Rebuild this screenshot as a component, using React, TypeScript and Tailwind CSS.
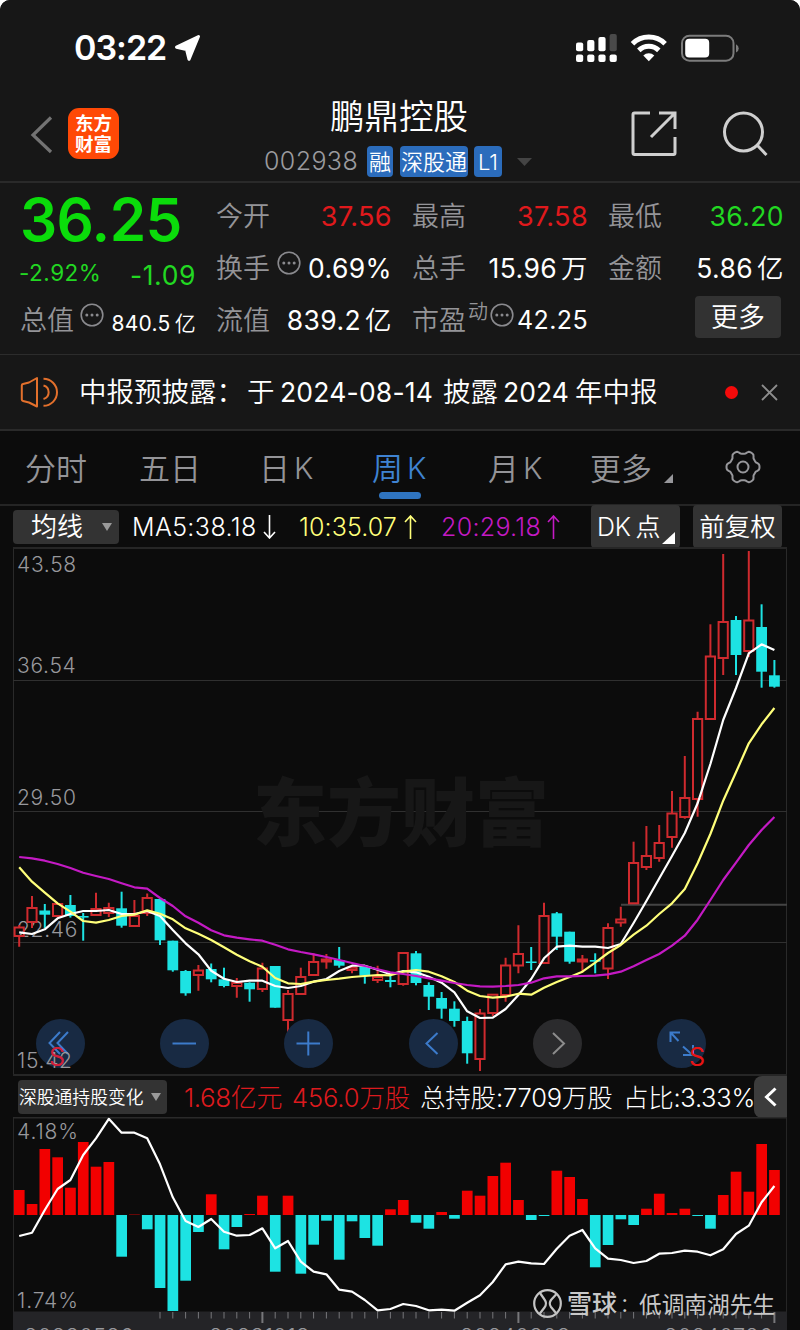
import { ReactNode } from 'react';

type Candle = [high: number, top: number, bottom: number, low: number, up: 0 | 1];

// high, body top, body bottom, low, rising
const candles: Candle[] = [
  [925, 927.5, 936, 946.8, 1], [896, 908, 922, 928, 1], [904, 910.5, 914.7, 928, 0], [903.5, 904, 916, 916.5, 1],
  [895, 905, 916, 917.6, 0], [913, 916, 917.6, 940.7, 0], [892.7, 909, 915, 915, 1], [902.7, 908, 913, 917, 1],
  [891.7, 908.3, 925.7, 927.7, 0], [900, 916, 926, 926, 1], [893.5, 898, 913, 916, 1], [899, 899, 940.3, 945, 0],
  [940.7, 940.7, 970.3, 971.7, 0], [970, 971, 993.3, 995.7, 0], [965, 970.5, 975, 990.7, 1], [963.5, 969, 979.3, 982.3, 0],
  [967.7, 979.3, 986, 987.3, 0], [978, 983, 986, 997.7, 1], [982.3, 982.7, 989.3, 1001.7, 0], [962.7, 968.5, 989, 992, 1],
  [966, 966, 1007.7, 1007.7, 0], [990, 994, 1020, 1034.3, 1], [967.7, 977, 994, 994, 1], [953.3, 962, 975, 975, 1],
  [954, 959.5, 961.5, 968.7, 1], [947, 960, 965.7, 967.7, 0], [965, 967.7, 970, 973.3, 1], [967, 967, 975.7, 983.7, 0],
  [965.7, 977, 980, 983, 1], [975.7, 980, 982, 987.3, 0], [952.7, 953, 984, 985.7, 1], [951, 953.3, 983, 985.3, 0],
  [982.3, 985, 996.7, 1010, 0], [992, 998, 1008.7, 1018.7, 0], [1001.3, 1008.7, 1021, 1026.7, 0], [1016.7, 1021, 1053.3, 1063.7, 0],
  [1009, 1013.5, 1059, 1071, 1], [994.3, 994.7, 1013, 1016, 1], [957.7, 965.5, 995, 1001.7, 1], [925.3, 954, 965.5, 973.3, 1],
  [947, 961.5, 963, 970, 0], [902.7, 916, 963, 963, 1], [912, 913.3, 936.7, 950, 0], [931.7, 931.7, 961.7, 963.7, 0],
  [955, 959.5, 961.5, 972.7, 1], [953.3, 960, 961.7, 973.3, 0], [923.3, 928, 968.5, 979, 1], [906.7, 919.5, 922.5, 926.7, 1],
  [841.7, 863, 903.3, 903.3, 1], [826, 856, 867, 870, 1], [825, 843, 858, 861.7, 1], [791, 813.5, 837, 847.7, 1],
  [756, 798, 817, 818.7, 1], [711.7, 719, 799, 816.7, 1], [624.3, 656.5, 719, 719, 1], [554, 622, 658, 675, 1],
  [616, 620, 655, 675, 0], [551, 620.5, 651, 657, 1], [604.3, 627, 671.7, 687.7, 0], [660, 675.3, 686.7, 687.7, 0],
];

const ma5 = [
  932.3, 934, 929.3, 918.3, 914, 911, 911, 910, 914, 914, 911, 916, 930, 943.3, 954.3, 970.7, 978.7, 982, 980.7, 980.7,
  986, 988, 986, 981.7, 979, 971, 965.7, 965.7, 969.7, 974.3, 971, 972.3, 976.7, 982.7, 992.3, 1011.3, 1018, 1017.7, 1009, 995,
  979, 958.3, 946.7, 945.7, 946.7, 946.7, 948, 944, 923, 901, 878.5, 856, 833, 803.3, 764, 720, 688, 653.3, 644.3, 650,
];
const ma10 = [
  867.3, 881.7, 892.7, 903.3, 911.7, 921, 922.7, 920, 916, 914.7, 910.3, 913.7, 919.3, 928.3, 933.7, 940, 947.3, 954.7, 961.3, 966.7,
  978, 983.3, 984, 981.7, 980, 978.7, 977, 976, 975, 975.3, 971.7, 970, 971.7, 976.3, 982, 990.7, 996, 997.7, 996.7, 993.7,
  994.7, 987.7, 982, 977, 971.7, 962.7, 953, 945, 934.7, 925.7, 914, 903.3, 889, 863.3, 834, 800.7, 772.3, 743.3, 724.3, 708,
];
const ma20 = [
  857, 858.3, 860.7, 864, 868, 872.7, 876, 879, 883.3, 887.3, 888.7, 898, 906, 916.3, 922.7, 930.3, 935.3, 937.7, 939.3, 940.7,
  944.7, 949.3, 952, 954.3, 957, 960, 963, 966, 969.3, 972.3, 974, 976, 978.3, 980.7, 983, 985, 986.3, 986.7, 986, 985,
  982.7, 978.3, 976.3, 976.3, 976, 975.7, 974.3, 971.7, 966.3, 960, 954, 945.7, 935.7, 919.7, 900, 880, 862.7, 845, 830, 817,
];
const flows = [
  25, 11, 66, 57.7, 27.3, 73, 48.3, 53, -41.7, 0.4, -14.3, -73, -96, -65.7, -17, 20.7, -34.3, -12, 1, 19.3,
  -56.7, 19.3, -58.7, -29.7, -5.7, -44.7, -6.3, -23, -30.7, 5.7, 15, -7.7, -13.7, 3, -3.7, 24.3, 19.3, 39, 52.3, 15,
  -5, -1, 44.3, 38, 16, -52.3, -30, -4.3, -10, 6.3, 21.3, 2, 6.3, -1, -13.7, 20, 43.3, 23.3, 71, 45,
];
const holding = [
  1236, 1232.7, 1210, 1189, 1180, 1155, 1138.3, 1118.8, 1132.7, 1132.7, 1138.3, 1164.3, 1197.3, 1221, 1227, 1219, 1231.7, 1235.7, 1235, 1228.3,
  1248.3, 1241, 1261.7, 1271.7, 1274.3, 1289.7, 1291.7, 1300, 1310.3, 1309, 1304, 1306, 1310.3, 1309.7, 1310.7, 1302.7, 1295.3, 1282, 1264.3, 1261.7,
  1263.3, 1264, 1248.7, 1235.7, 1230, 1248.3, 1258.7, 1260, 1263, 1261, 1253.7, 1253, 1250.7, 1251.7, 1255.3, 1249.3, 1234, 1225.7, 1202.3, 1186,
];

const x = (i: number) => 19.2 + i * 12.8;
const line = (ys: number[]) => ys.map((y, i) => `${x(i).toFixed(1)},${y}`).join(' ');

// six-lobed outline of the settings icon
const gear = Array.from({ length: 72 }, (_, i) => {
  const a = (i * Math.PI) / 36;
  const r = 14.9 + 1.7 * Math.tanh(1.8 * Math.cos(6 * a));
  return `${(r * Math.cos(a)).toFixed(2)},${(r * Math.sin(a)).toFixed(2)}`;
}).join(' ');

function StatusBar() {
  return (
    <div className="flex h-[96px] items-center pl-[74px] pr-[60px]">
      <span className="w-[99px] text-[34px] leading-none font-semibold tracking-[-1px] text-white">03:22</span>
      <svg className="h-[30px] w-[30px]" viewBox="173 33 30 30">
        <path d="M198.500 36.500 189 59.300 186.500 49.500 176.500 47.200Z" fill="#fff" stroke="#fff" strokeWidth="3" strokeLinejoin="round" />
      </svg>
      <svg className="ml-auto h-[30px] w-[166px]" viewBox="574 32 166 30">
        <g fill="#fff">
          <rect x="576" y="41.5" width="7.2" height="8.7" rx="2" />
          <rect x="587.2" y="39" width="7.2" height="11.2" rx="2" />
          <rect x="598.4" y="36" width="7.2" height="14.2" rx="2" />
          <rect x="609.6" y="33" width="7.2" height="17.2" rx="2" fill="#4a4a4a" />
          {[576, 587.2, 598.4, 609.6].map((dot) => (
            <rect key={dot} x={dot} y="53.4" width="7.2" height="7.6" rx="2" />
          ))}
          <path d="M648.800 60.200 643.300 54.500a8 8 0 0 1 11 0Z" />
        </g>
        <g fill="none" stroke="#fff" strokeWidth="5">
          <path d="M632.500 42.800a23.200 23.200 0 0 1 32.600 0" />
          <path d="M638.800 49.400a14.400 14.400 0 0 1 20 0" />
        </g>
        <rect x="682" y="34.7" width="51.5" height="25" rx="7.5" fill="none" stroke="#7c7c7c" strokeWidth="2" />
        <rect x="685.2" y="37.8" width="24" height="18.6" rx="4" fill="#fff" />
        <path d="M736 43.2a4.6 4.6 0 0 1 0 8.4Z" fill="#7c7c7c" />
      </svg>
    </div>
  );
}

function Header() {
  return (
    <header className="flex h-[87px] items-start border-b-2 border-[#2a2a2a]">
      <svg className="mt-[19px] ml-[28px] h-[40px] w-[26px]" viewBox="28 115 26 40">
        <path d="M51 117.500 33 135 51 152" fill="none" stroke="#737373" strokeWidth="3.2" />
      </svg>
      <div className="mt-[12px] ml-[14px] flex h-[51px] w-[51px] flex-col items-center justify-center rounded-[11px] bg-[#ff4906] text-[18.500px] leading-[21px] font-bold text-white">
        <span>东方</span>
        <span>财富</span>
      </div>
      <div className="ml-[145px] flex w-[270px] flex-col">
        <h1 className="ml-[66px] h-[50px] text-[34.5px] leading-[42px] font-[350] whitespace-nowrap text-white">鹏鼎控股</h1>
        <div className="flex h-[31px] items-center text-[22px] leading-none font-[350] text-white">
          <span className="w-[103px] text-[25px] font-light tracking-[0.4px] text-[#9b9b9f]">002938</span>
          <span className="flex h-[31px] w-[26px] items-center justify-center rounded bg-[#2b6cbc]">融</span>
          <span className="ml-[7px] flex h-[31px] w-[68px] items-center justify-center rounded bg-[#2b6cbc]">深股通</span>
          <span className="ml-[6px] flex h-[31px] w-[28px] items-center justify-center rounded bg-[#2b6cbc]">L1</span>
          <svg className="ml-[15px] h-[8px] w-[15px]" viewBox="0 0 15 8">
            <path d="M0 0H15L7.500 8Z" fill="#444" />
          </svg>
        </div>
      </div>
      <svg className="mt-[12px] ml-[91px] h-[52px] w-[144px]" viewBox="625 108 144 52" fill="none" stroke="#cfcfcf" strokeWidth="3">
        <path d="M650 113H634.500a1.500 1.500 0 0 0-1.500 1.500V153a1.500 1.500 0 0 0 1.500 1.500H673.500a1.500 1.500 0 0 0 1.500-1.500V137" />
        <path d="M659 113H675V129M651 137 675 113" />
        <circle cx="743.500" cy="132" r="19" />
        <path d="M757 145 766.500 155" />
      </svg>
    </header>
  );
}

function Dots() {
  return (
    <svg className="h-[24px] w-[24px] shrink-0" viewBox="0 0 24 24">
      <circle cx="12" cy="12" r="10.8" fill="none" stroke="#8a8a8e" strokeWidth="1.600" />
      <circle cx="6.800" cy="12" r="1.500" fill="#8a8a8e" />
      <circle cx="12" cy="12" r="1.500" fill="#8a8a8e" />
      <circle cx="17.200" cy="12" r="1.500" fill="#8a8a8e" />
    </svg>
  );
}

type CellProps = { label: string; extra?: ReactNode; children?: ReactNode; tone?: string };

function Cell({ label, extra, children, tone = 'text-white text-[26.500px]' }: CellProps) {
  return (
    <div className="flex h-[52px] w-[176px] items-center whitespace-nowrap">
      <span className="text-[27px] font-[350] text-[#949498]">{label}</span>
      {extra}
      <span className={`ml-auto tracking-[0.4px] ${tone}`}>{children}</span>
    </div>
  );
}

function Unit({ children }: { children: string }) {
  return <span className="ml-[4px] font-[350]">{children}</span>;
}

function Quote() {
  return (
    <section className="flex h-[172px] gap-[20px] border-b border-[#2c2c2c] pt-[7px] pl-[20px] leading-none">
      <div className="w-[176px] whitespace-nowrap">
        <div className="flex h-[60px] items-center pt-px text-[58.500px] font-semibold tracking-[-0.6px] text-[#0bdc0b]">36.25</div>
        <div className="flex h-[46px] items-center justify-between text-[#22d822]">
          <span className="-ml-px text-[22.500px] tracking-[0.5px]">-2.92%</span>
          <span className="pt-[5px] text-[26.500px] tracking-[0.6px]">-1.09</span>
        </div>
        <div className="flex h-[48px] items-center">
          <span className="text-[27px] font-[350] text-[#949498]">总值</span>
          <span className="mb-[11px] ml-[6px]"><Dots /></span>
          <span className="mt-[6px] ml-auto text-[21px] tracking-[0.3px] text-white">840.5<Unit>亿</Unit></span>
        </div>
      </div>
      <div>
        <Cell label="今开" tone="text-[#e0191c] text-[27px]">37.56</Cell>
        <Cell label="换手" extra={<span className="mb-[10px] ml-[7px]"><Dots /></span>}>0.69%</Cell>
        <Cell label="流值">839.2<Unit>亿</Unit></Cell>
      </div>
      <div>
        <Cell label="最高" tone="text-[#e0191c] text-[27px]">37.58</Cell>
        <Cell label="总手">15.96<Unit>万</Unit></Cell>
        <Cell
          label="市盈"
          tone="text-white text-[25px]"
          extra={<><span className="mb-[16px] ml-[2px] text-[20px] font-[350] text-[#949498]">动</span><span className="mb-[10px] ml-[2px]"><Dots /></span></>}
        >
          42.25
        </Cell>
      </div>
      <div>
        <Cell label="最低" tone="text-[#22d822] text-[26.500px]">36.20</Cell>
        <Cell label="金额">5.86<Unit>亿</Unit></Cell>
        <button className="mt-[2px] ml-[87px] flex h-[42px] w-[86px] items-center justify-center rounded bg-[#323232] pt-px text-[27px] font-[350] text-white">更多</button>
      </div>
    </section>
  );
}

function Notice() {
  return (
    <section className="flex h-[76px] items-center border-b-2 border-[#2a2a2a] pl-[20px] text-[27.500px] leading-none font-[350] whitespace-nowrap text-white">
      <svg className="h-[32px] w-[38px]" viewBox="20 375 38 32" fill="none" stroke="#e3702c" strokeWidth="2" strokeLinejoin="round">
        <path d="M23 383 29 381.500 37 377V405.500L29 401.500 23 400Q21.800 399.700 21.800 398.500V384.500Q21.800 383.300 23 383Z" />
        <path d="M43.500 384.500a7 7 0 0 1 0 13.500M43.500 377.800a13.500 13.500 0 0 1 0 27" />
      </svg>
      <span className="ml-[21px] w-[168px] pt-px">中报预披露：</span>
      <span className="w-[33px] pt-px">于</span>
      <span className="w-[163px] text-[26.500px] font-normal tracking-[0.2px]">2024-08-14</span>
      <span className="w-[60px] pt-px">披露</span>
      <span className="w-[72px] text-[26.500px] font-normal">2024</span>
      <span className="w-[150px] pt-px">年中报</span>
      <span className="h-[13px] w-[13px] rounded-full bg-[#f50a0a]" />
      <svg className="ml-[23px] h-[17px] w-[17px]" viewBox="0 0 17 17">
        <path d="M1 1 16 16M16 1 1 16" stroke="#8d8d8d" strokeWidth="1.800" />
      </svg>
    </section>
  );
}

const tabs = [
  { name: '分时', box: 'w-[114px]' },
  { name: '五日', box: 'w-[120px]' },
  { name: '日', k: true, box: 'w-[113px]' },
  { name: '周', k: true, box: 'w-[116px]', active: true },
  { name: '月', k: true, box: 'w-[102px]' },
  { name: '更多', box: 'w-[74px]' },
];

function Tabs() {
  return (
    <nav className="flex h-[75px] border-b-2 border-[#252525] pl-[25px] text-[31px] leading-none font-[350] whitespace-nowrap text-[#949498]">
      {tabs.map((t) => (
        <div key={t.name} className={`flex flex-col ${t.box} ${t.active ? 'text-[#3f83d2]' : ''}`}>
          <span className="flex h-[61px] items-center gap-[4px] pt-[13px]">
            {t.name}
            {t.k && <span className="text-[30px]">K</span>}
          </span>
          {t.active && <span className="ml-[7px] h-[7px] w-[42px] rounded-full bg-[#2f74c0]" />}
        </div>
      ))}
      <svg className="mt-[43px] h-[9px] w-[9px]" viewBox="0 0 9 9">
        <path d="M9 0V9H0Z" fill="#97979b" />
      </svg>
      <svg className="mt-[18px] ml-[52px] h-[36px] w-[36px]" viewBox="-18 -18 36 36" fill="none" stroke="#97979b" strokeWidth="2" strokeLinejoin="round">
        <polygon points={gear} />
        <circle r="5.500" />
      </svg>
    </nav>
  );
}

function Arrow({ down }: { down?: boolean }) {
  return (
    <svg className={`h-[24px] w-[13px] ${down ? 'rotate-180' : ''}`} viewBox="0 0 13 24" fill="none" stroke="currentColor" strokeWidth="1.600">
      <path d="M6.500 24V1M1 7 6.500 1 12 7" />
    </svg>
  );
}

function Caret() {
  return (
    <svg className="h-[8px] w-[10px]" viewBox="0 0 10 8">
      <path d="M0 0H10L5 8Z" fill="#9a9a9a" />
    </svg>
  );
}

function Indicators() {
  return (
    <div className="flex h-[41px] items-center pl-[13px] text-[25px] leading-none font-light whitespace-nowrap text-white">
      <button className="flex h-[34px] w-[106px] items-center rounded bg-[#333] pl-[18px] text-[26px] font-[350]">
        <span className="w-[71px] pt-px text-left">均线</span>
        <Caret />
      </button>
      <span className="ml-[13px] w-[131px] pt-[2px] tracking-[0.4px]">MA5:38.18</span>
      <Arrow down />
      <span className="ml-[23px] w-[105px] pt-[2px] tracking-[0.1px] text-[#ffff7a]">10:35.07</span>
      <span className="text-[#ffff7a]"><Arrow /></span>
      <span className="ml-[24px] w-[106px] pt-[2px] tracking-[0.3px] text-[#c41ac4]">20:29.18</span>
      <span className="text-[#c41ac4]"><Arrow /></span>
      <button className="ml-[31px] flex h-[43px] w-[89px] items-center rounded bg-[#333] pl-[6px] font-[350]">
        <span className="w-[65px] pt-[2px] text-left tracking-[-0.3px]">DK<span className="ml-[5px]">点</span></span>
        <svg className="mt-[22px] h-[12px] w-[13px] shrink-0" viewBox="0 0 13 12">
          <path d="M13 0V12H0Z" fill="#fff" />
        </svg>
      </button>
      <button className="ml-[13px] flex h-[43px] w-[89px] items-center justify-center rounded bg-[#333] pt-px text-[25.500px] font-[350]">前复权</button>
    </div>
  );
}

const controls = [
  { name: 'first', d: 'M24 13 13.500 24 24 35M32 13 21.500 24 32 35' },
  { name: 'zoom out', d: 'M12.500 24.500H36' },
  { name: 'zoom in', d: 'M12.500 24.500H36M24.300 12.500V36.500' },
  { name: 'previous', d: 'M28.500 14 17.500 24.500 28.500 35' },
  { name: 'next', d: 'M20 14 31 24.500 20 35', off: true },
  { name: 'fullscreen', d: 'M13.500 23V13.500H23M14 14 21.500 22M26 27.500 35 35.500M36 26V36H26' },
];

function PriceChart() {
  return (
    <div className="relative h-[529px]">
      <svg className="block h-[529px] w-[800px]" viewBox="0 547 800 529">
        <g fill="none" stroke="#2a2a2a" strokeWidth="1">
          <path d="M13.500 548V1075.500M786.500 548V1075.500" />
          <path d="M13 680.500H787M13 811.500H787M13 942.500H787" stroke="#303030" />
          <path d="M13 548H787M13 1075H787" stroke="#262626" strokeWidth="2" />
        </g>
        <text x="253" y="840" fill="#171717" fontSize="74" fontWeight="900">东方财富</text>
        <path d="M621 904.700H787" stroke="#444" strokeWidth="2" />
        <g fill="#98989c" fontSize="21" fontWeight="300" letterSpacing="0.7">
          <text x="17" y="571.500">43.58</text>
          <text x="17" y="673">36.54</text>
          <text x="17" y="804.500">29.50</text>
          <text x="17" y="936.500">22.46</text>
        </g>
        {candles.map(([high, top, bottom, low, up], i) =>
          up ? (
            <g key={i} fill="none" stroke="#cf2a2e" strokeWidth="2">
              <path d={`M${x(i)} ${high}V${top}M${x(i)} ${bottom}V${low}`} />
              <rect x={x(i) - 4.6} y={top} width="9.200" height={bottom - top} />
            </g>
          ) : (
            <g key={i} fill="#1de3e3">
              <rect x={x(i) - 1} y={high} width="2" height={low - high} />
              <rect x={x(i) - 5.4} y={top} width="10.800" height={bottom - top} />
            </g>
          ),
        )}
        <g fill="none" strokeWidth="2.200" strokeLinejoin="round">
          <polyline points={line(ma5)} stroke="#fff" />
          <polyline points={line(ma10)} stroke="#ffff7a" />
          <polyline points={line(ma20)} stroke="#c41ac4" />
        </g>
      </svg>
      <div className="absolute top-[472px] left-[36px] flex gap-[75.200px]">
        {controls.map((c) => (
          <button key={c.name} aria-label={c.name} className={`h-[49px] w-[49px] rounded-full ${c.off ? 'bg-[#2b2b2d]' : 'bg-[#182a43]'}`}>
            <svg className={c.off ? 'text-[#8c8c8c]' : 'text-[#3c7bcb]'} viewBox="0 0 49 49" fill="none" stroke="currentColor" strokeWidth="2">
              <path d={c.d} />
            </svg>
          </button>
        ))}
      </div>
      <span className="absolute top-[503px] left-[17px] text-[21px] leading-none font-light tracking-[0.7px] text-[#98989c]">15.42</span>
      <span className="absolute top-[498px] left-[49px] text-[25px] leading-none text-[#d0203a]">S</span>
      <span className="absolute top-[498px] left-[689px] text-[25px] leading-none text-[#e81414]">S</span>
    </div>
  );
}

function HoldingBar() {
  return (
    <div className="flex h-[41px] items-center pl-[18px] text-[25.500px] leading-none font-light whitespace-nowrap">
      <button className="flex h-[34px] w-[149px] items-center rounded bg-[#333] pl-px text-[17.800px] font-[350] text-white">
        <span className="w-[132px] pt-[2px] text-left">深股通持股变化</span>
        <Caret />
      </button>
      <span className="ml-[17px] w-[108px] pt-[2px] text-[26px] tracking-[-0.4px] text-[#dc1a1e]">1.68亿元</span>
      <span className="w-[128px] pt-[2px] tracking-[-0.1px] text-[#dc1a1e]">456.0万股</span>
      <span className="w-[203px] pt-[2px] tracking-[-0.2px] text-white">总持股:7709万股</span>
      <span className="w-[131px] pt-[2px] tracking-[-0.3px] text-white">占比:3.33%</span>
      <button aria-label="expand" className="flex h-[42px] w-[33px] items-center justify-center rounded-l-lg bg-[#3c3c3c]">
        <svg className="h-[20px] w-[13px]" viewBox="0 0 13 20" fill="none" stroke="#fff" strokeWidth="3">
          <path d="M11.500 1.500 2.500 10 11.500 18.500" />
        </svg>
      </button>
    </div>
  );
}

function HoldingChart() {
  return (
    <svg className="block h-[213px] w-[800px]" viewBox="0 1117 800 213">
      <path d="M13.500 1117V1330M786.500 1117V1330" stroke="#262626" />
      <path d="M13 1117.500H787" stroke="#2a2a2a" strokeWidth="2" />
      <rect x="13" y="1311.500" width="774" height="20" fill="#242427" />
      {flows.map((v, i) => (
        <rect
          key={i}
          x={x(i) - 5.3}
          y={v > 0 ? 1215 - v : 1215}
          width="10.700"
          height={Math.abs(v)}
          fill={v > 0 ? '#f20000' : '#1de3e3'}
        />
      ))}
      <g fill="#98989c" fontSize="21" fontWeight="300" letterSpacing="0.9">
        <text x="17" y="1138.500">4.18%</text>
        <text x="17" y="1308">1.74%</text>
      </g>
      <polyline points={line(holding)} fill="none" stroke="#fff" strokeWidth="2.200" strokeLinejoin="round" />
      {flows.map((_, i) =>
        i < 11 ? null : (
          <path key={i} d={`M${x(i)} 1312V${i % 20 === 19 ? 1323 : 1318.5}`} stroke="#77777a" strokeWidth={i % 20 === 19 ? 2 : 1} />
        ),
      )}
      <g fill="#98989c" fontSize="22" fontWeight="300" letterSpacing="0.3">
        <text x="24" y="1344">20230526</text>
        <text x="209" y="1344">20231013</text>
        <text x="460" y="1344">20240308</text>
        <text x="664" y="1344">20240726</text>
      </g>
      <g fill="none" stroke="#c4c4c4" strokeWidth="2.200">
        <circle cx="547.500" cy="1303.500" r="13.300" />
        <path d="M540 1293 544.500 1299.500Q547.500 1303.500 544.500 1307.500L539.500 1314M556.500 1294 551 1300Q548.500 1303.500 551 1307L556 1313" />
      </g>
      <g fill="#c8c8c8" fontSize="22.700">
        <text x="567" y="1312.500" fontWeight="500" fontSize="25">雪球</text>
        <text x="620" y="1311.500" fontSize="19">：</text>
        <text x="639" y="1312.500">低调南湖先生</text>
      </g>
    </svg>
  );
}

export default function App() {
  return (
    <div className="h-[1330px] w-[800px] overflow-hidden bg-white [font-family:Inter,'Noto_Sans_CJK_SC',sans-serif]">
      <div className="h-[1330px] rounded-t-[10px] bg-[#0c0c0c]">
        <div className="rounded-t-[10px] bg-[#171717]">
          <StatusBar />
          <Header />
          <Quote />
          <Notice />
        </div>
        <Tabs />
        <Indicators />
        <PriceChart />
        <HoldingBar />
        <HoldingChart />
      </div>
    </div>
  );
}
